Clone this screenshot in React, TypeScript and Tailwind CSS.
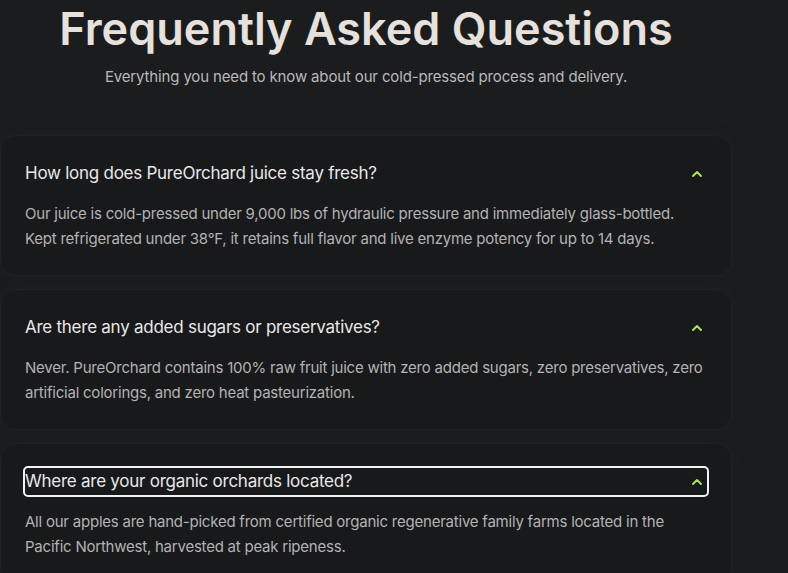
import { ChevronUp } from "lucide-react";

const faqs = [
  {
    q: "How long does PureOrchard juice stay fresh?",
    a: "Our juice is cold-pressed under 9,000 lbs of hydraulic pressure and immediately glass-bottled. Kept refrigerated under 38°F, it retains full flavor and live enzyme potency for up to 14 days.",
  },
  {
    q: "Are there any added sugars or preservatives?",
    a: "Never. PureOrchard contains 100% raw fruit juice with zero added sugars, zero preservatives, zero artificial colorings, and zero heat pasteurization.",
  },
  {
    q: "Where are your organic orchards located?",
    a: "All our apples are hand-picked from certified organic regenerative family farms located in the Pacific Northwest, harvested at peak ripeness.",
    focused: true,
  },
];

export default function App() {
  return (
    <div
      className="min-h-screen overflow-hidden bg-[#1b1c1e]"
      style={{ fontFamily: "Inter, 'Noto Sans', sans-serif" }}
    >
      <section className="w-[732px]">
        <header className="flex flex-col items-center pt-[6px]">
          <h1 className="text-[45px] font-semibold leading-none text-[#e6e1dc]">
            Frequently Asked Questions
          </h1>
          <p className="mt-[14px] text-[15px] leading-6 tracking-[-0.01em] text-[#b9b9b9]">
            Everything you need to know about our cold-pressed process and delivery.
          </p>
        </header>

        <div className="mt-[46px] flex flex-col gap-[13px]">
          {faqs.map((f) => (
            <div
              key={f.q}
              className="rounded-2xl border border-[#202220] bg-[#18191b] px-6 py-6 shadow-[0_0_12px_rgba(40,44,36,0.35)]"
            >
              <button
                className={
                  "flex h-[27px] w-full items-center justify-between rounded-[3px] text-left " +
                  (f.focused ? "outline-2 outline-[#f2f2f2]" : "")
                }
              >
                <span className="text-[17px] leading-[27px] tracking-[-0.015em] text-[#e8e8e8]">
                  {f.q}
                </span>
                <ChevronUp size={16} strokeWidth={3} className="mr-[2px] text-[#a6e35a]" />
              </button>
              <p className="mt-3.5 text-[15px] leading-[25px] tracking-[-0.015em] text-[#b3b3b3]">
                {f.a}
              </p>
            </div>
          ))}
        </div>
      </section>
    </div>
  );
}
